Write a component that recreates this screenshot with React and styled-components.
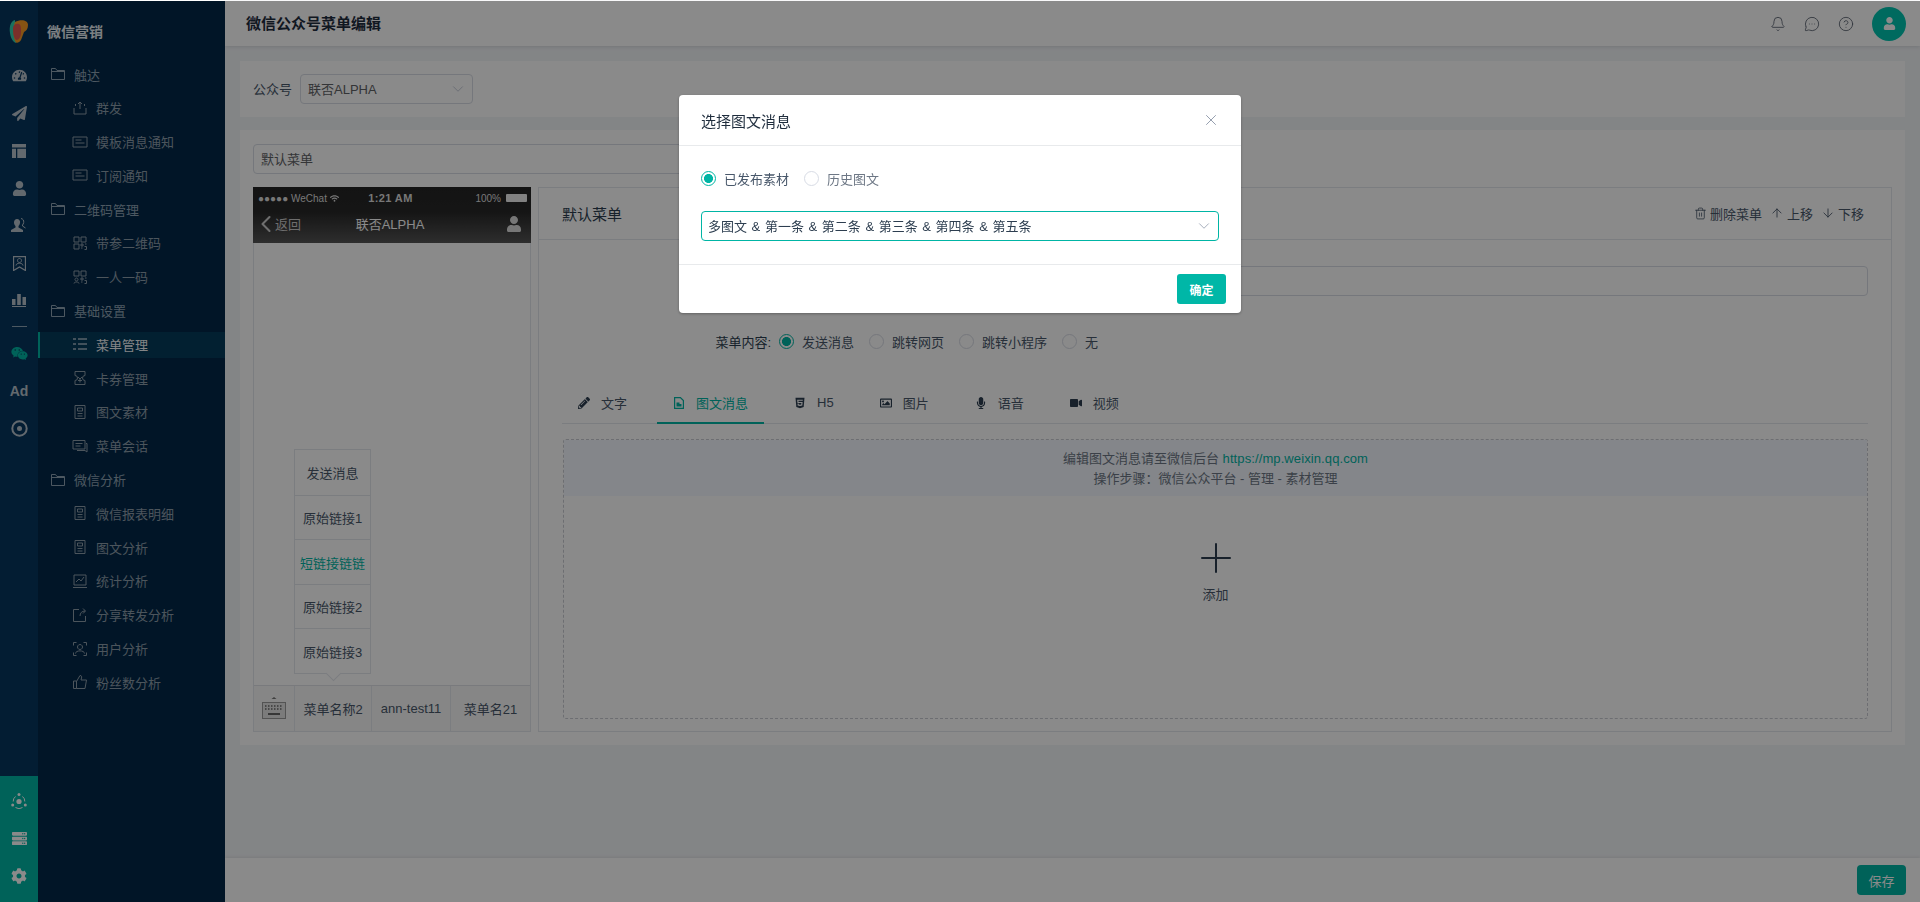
import styled, { createGlobalStyle } from "styled-components";
import { ArrowDown, ArrowUp, Bell, ChevronDown, ChevronLeft, CircleHelp, MessageCircleMore, Plus, Trash2, X } from "lucide-react";
import {
  FaCog,
  FaHtml5,
  FaMicrophone,
  FaPaperPlane,
  FaPencilAlt,
  FaRegImage,
  FaServer,
  FaTachometerAlt,
  FaUser,
  FaVideo,
  FaWeixin,
  FaWifi,
} from "react-icons/fa";

const teal = "#00b5a5";
const fontStack = `"Liberation Sans", "Noto Sans CJK SC", sans-serif`;

const Global = createGlobalStyle`
  html, body { margin: 0; padding: 0; height: 100%; overflow: hidden; background: #fff; }
  body { font-family: ${fontStack}; font-size: 13px; color: #2d3e50; }
  * { box-sizing: border-box; }
`;

const Page = styled.div`
  display: flex;
  height: 902px;
  padding-top: 1px;
`;

const Rail = styled.aside`
  width: 38px;
  flex: none;
  display: flex;
  flex-direction: column;
  align-items: center;
  background: #07375f;
`;

const LogoBox = styled.div`
  height: 56px;
  width: 100%;
  display: flex;
  align-items: center;
  justify-content: center;
  padding-top: 6px;
`;

const RailItem = styled.div`
  height: 37.5px;
  width: 100%;
  flex: none;
  display: flex;
  align-items: center;
  justify-content: center;
  color: ${(p) => p.$color || "#b8c2cc"};
  font-size: 15px;
`;

const RailAd = styled(RailItem)`
  font-weight: 700;
  font-size: 14px;
`;

const RailRule = styled.div`
  width: 15px;
  height: 1px;
  flex: none;
  margin: 6px 0 8px;
  background: #8fa4b5;
`;

const RailBottom = styled.div`
  margin-top: auto;
  width: 100%;
  height: 126px;
  flex: none;
  padding-top: 6px;
  background: ${teal};
`;

const Sidebar = styled.nav`
  width: 187px;
  flex: none;
  background: #032848;
`;

const SideTitle = styled.div`
  height: 61px;
  padding: 0 0 2px 9px;
  display: flex;
  align-items: center;
  font-size: 14px;
  font-weight: 700;
  color: #e6edf2;
`;

const SideList = styled.div`
  display: flex;
  flex-direction: column;
  gap: 7.8px;
`;

const SideRow = styled.div`
  height: 26px;
  display: flex;
  align-items: center;
  gap: 8px;
  padding-left: ${(p) => (p.$group ? "12px" : "34px")};
  padding-bottom: 2px;
  color: ${(p) => (p.$active ? "#f2f5f7" : p.$group ? "#8ea3b4" : "#8d9dab")};
  background: ${(p) => (p.$active ? "#053b5c" : "transparent")};
  box-shadow: ${(p) => (p.$active ? `inset 2px 0 0 ${teal}` : "none")};
  white-space: nowrap;
  svg { flex: none; }
`;

const Main = styled.main`
  flex: 1;
  min-width: 0;
  display: flex;
  flex-direction: column;
  background: #f3f5f8;
`;

const TopBar = styled.header`
  height: 45px;
  flex: none;
  display: flex;
  align-items: center;
  padding: 0 14px 0 21px;
  background: #fff;
  box-shadow: 0 1px 4px rgba(0, 21, 41, 0.12);
`;

const PageTitle = styled.h1`
  margin: 0 0 2px;
  font-size: 15px;
  font-weight: 700;
  color: #1f2d3d;
`;

const TopTools = styled.div`
  margin-left: auto;
  display: flex;
  align-items: center;
  gap: 18px;
  color: #5b6472;
`;

const Avatar = styled.div`
  width: 34px;
  height: 34px;
  border-radius: 50%;
  background: #00c4b0;
  color: #fff;
  display: flex;
  align-items: center;
  justify-content: center;
`;

const Content = styled.div`
  flex: 1;
  display: flex;
  flex-direction: column;
  gap: 13px;
  padding: 15px 15px 0;
`;

const FilterCard = styled.section`
  height: 56px;
  display: flex;
  align-items: center;
  gap: 8px;
  padding: 0 13px;
  background: #fff;
`;

const FieldLabel = styled.span`
  color: #48576a;
  padding-bottom: 1px;
`;

const SelectBox = styled.div`
  width: ${(p) => p.$width || "173px"};
  height: 30px;
  display: flex;
  align-items: center;
  justify-content: space-between;
  padding: 0 5px 1px ${(p) => (p.$focus ? "6px" : "7px")};
  border: 1px solid ${(p) => (p.$focus ? teal : "#d8dce5")};
  border-radius: 4px;
  background: #fff;
  color: ${(p) => (p.$focus ? "#2d3e50" : "#606266")};
  word-spacing: ${(p) => (p.$focus ? "1px" : "0")};
  svg { color: ${(p) => (p.$focus ? "#8a94a6" : "#b4bccc")}; }
`;

const EditCard = styled.section`
  height: 615px;
  padding: 14px 13px 12px;
  background: #fff;
`;

const NameInput = styled.div`
  width: 640px;
  height: 30px;
  display: flex;
  align-items: center;
  padding: 0 0 2px 7px;
  border: 1px solid #d8dce5;
  border-radius: 4px;
  color: #606266;
`;

const Workspace = styled.div`
  display: flex;
  gap: 7px;
  margin-top: 13px;
  height: 545px;
`;

const Phone = styled.div`
  width: 278px;
  flex: none;
  display: flex;
  flex-direction: column;
  border: 1px solid #e4e7ed;
  border-top: 0;
`;

const PhoneHead = styled.div`
  height: 56px;
  flex: none;
  margin: 0 -1px;
  color: #fff;
  background: linear-gradient(#242424 0%, #282828 45%, #555 100%);
`;

const StatusBar = styled.div`
  height: 22px;
  display: grid;
  grid-template-columns: 1fr 1fr 1fr;
  align-items: center;
  padding: 0 4px 0 5px;
  font-size: 10px;
  color: #ddd;
`;

const StatusLeft = styled.span`
  display: flex;
  align-items: center;
  gap: 3px;
  white-space: nowrap;
`;

const StatusTime = styled.span`
  font-weight: 700;
  font-size: 11px;
  letter-spacing: 0.4px;
  text-align: center;
  transform: translateX(-2px);
`;

const StatusRight = styled.span`
  display: flex;
  align-items: center;
  justify-content: flex-end;
  gap: 5px;
`;

const Battery = styled.i`
  display: block;
  width: 21px;
  height: 8px;
  background: #eee;
  border-radius: 1px;
`;

const NavBar = styled.div`
  height: 34px;
  display: grid;
  grid-template-columns: 1fr auto 1fr;
  align-items: center;
  padding: 0 9px 5px 5px;
  font-size: 13px;
`;

const NavBack = styled.span`
  display: flex;
  align-items: center;
  color: #ccc;
  svg { margin: -6px -5px -6px -6px; }
`;

const NavPerson = styled.span`
  display: flex;
  justify-content: flex-end;
  font-size: 16px;
  color: #ddd;
`;

const PhoneScreen = styled.div`
  flex: 1;
  display: flex;
  flex-direction: column;
  justify-content: flex-end;
  padding: 0 0 11px 40px;
`;

const SubMenu = styled.div`
  position: relative;
  width: 77px;
  border: 1px solid #e4e7ed;
  &::after {
    content: "";
    position: absolute;
    left: 33px;
    bottom: -6px;
    width: 10px;
    height: 10px;
    background: #fff;
    border-right: 1px solid #e4e7ed;
    border-bottom: 1px solid #e4e7ed;
    transform: rotate(45deg);
  }
`;

const SubItem = styled.div`
  height: 44.6px;
  display: flex;
  align-items: center;
  justify-content: center;
  font-size: 13px;
  white-space: nowrap;
  color: ${(p) => (p.$active ? teal : "#48576a")};
  & + & { border-top: 1px solid #e4e7ed; }
`;

const PhoneBar = styled.div`
  height: 46px;
  flex: none;
  display: grid;
  grid-template-columns: 40px 77px 79px 1fr;
  border-top: 1px solid #dfe2e8;
  background: #f8f8f8;
`;

const BarCell = styled.div`
  display: flex;
  align-items: center;
  justify-content: center;
  padding-bottom: 1px;
  white-space: nowrap;
  color: #48576a;
  & + & { border-left: 1px solid #e4e7ed; }
`;

const Panel = styled.div`
  flex: 1;
  min-width: 0;
  border: 1px solid #e4e7ed;
`;

const PanelHead = styled.div`
  height: 53px;
  display: flex;
  align-items: center;
  padding: 0 27px 0 23px;
  border-bottom: 1px solid #e4e7ed;
  margin-top: -1px;
`;

const PanelTitle = styled.div`
  font-size: 15px;
  color: #2d3e50;
`;

const PanelActions = styled.div`
  margin-left: auto;
  display: flex;
  align-items: center;
  gap: 8px;
`;

const PanelAction = styled.span`
  display: flex;
  align-items: center;
  gap: 3px;
  color: #48576a;
`;

const PanelBody = styled.div`
  padding: 26px 23px 0 24px;
`;

const FormRow = styled.div`
  display: grid;
  grid-template-columns: 208px 1fr;
  column-gap: 8px;
  align-items: center;
  margin-top: ${(p) => p.$top || 0}px;
`;

const FormLabel = styled.label`
  text-align: right;
  color: #2d3e50;
`;

const FormInput = styled.div`
  height: 30px;
  border: 1px solid #d8dce5;
  border-radius: 4px;
`;

const RadioGroup = styled.div`
  display: flex;
  align-items: center;
  gap: 15px;
  height: 20px;
`;

const RadioItem = styled.span`
  display: flex;
  align-items: center;
  gap: 8px;
  color: ${(p) => p.$color || "#48576a"};
`;

const RadioDot = styled.i`
  display: block;
  flex: none;
  width: 15px;
  height: 15px;
  border-radius: 50%;
  border: 1px solid ${(p) => (p.$on ? teal : "#d8dce5")};
  background: ${(p) => (p.$on ? `radial-gradient(circle, ${teal} 0 4.2px, #fff 4.8px)` : "#fff")};
`;

const Tabs = styled.div`
  display: flex;
  gap: 14px;
  height: 39px;
  margin-top: 34px;
  margin-left: -1px;
  border-bottom: 1px solid #e4e7ed;
`;

const Tab = styled.div`
  height: 39px;
  display: flex;
  align-items: center;
  gap: 11px;
  padding: 0 16px 2px;
  color: ${(p) => (p.$active ? teal : "#48576a")};
  border-bottom: 2px solid ${(p) => (p.$active ? teal : "transparent")};
  svg { flex: none; width: 12px; color: ${(p) => (p.$active ? teal : "#2d3e50")}; font-size: 12px; }
`;

const DropZone = styled.div`
  height: 280px;
  margin-top: 15px;
  border: 1px dashed #c9ccd2;
  border-radius: 3px;
  display: flex;
  flex-direction: column;
  align-items: center;
`;

const Notice = styled.div`
  width: 100%;
  height: 56px;
  padding-top: 9px;
  text-align: center;
  line-height: 20px;
  color: #6d7785;
  background: #f4f8ff;
`;

const NoticeLink = styled.span`
  color: ${teal};
  letter-spacing: 0.1px;
`;

const AddIcon = styled.div`
  margin-top: 45px;
  height: 34px;
  display: flex;
  align-items: center;
  justify-content: center;
  color: #2d3e50;
`;

const AddText = styled.div`
  margin-top: 9px;
  color: #48576a;
`;

const FootBar = styled.footer`
  height: 44px;
  flex: none;
  margin-top: auto;
  display: flex;
  align-items: center;
  justify-content: flex-end;
  padding: 0 14px 0 0;
  background: #fff;
  box-shadow: 0 -1px 3px rgba(0, 0, 0, 0.08);
`;

const SaveButton = styled.button`
  width: 49px;
  height: 30px;
  padding: 0;
  border: 0;
  border-radius: 4px;
  background: ${teal};
  color: #fff;
  font: 13px ${fontStack};
`;

const Overlay = styled.div`
  position: fixed;
  inset: 1px 0 0 0;
  background: rgba(0, 0, 0, 0.46);
`;

const Dialog = styled.div`
  position: fixed;
  left: 679px;
  top: 95px;
  width: 562px;
  height: 218px;
  display: flex;
  flex-direction: column;
  background: #fff;
  border-radius: 4px;
  box-shadow: 0 1px 3px rgba(0, 0, 0, 0.3);
`;

const DialogHead = styled.div`
  height: 51px;
  display: flex;
  align-items: center;
  justify-content: space-between;
  padding: 0 21px 0 22px;
  font-size: 15px;
  color: #1f2d3d;
  border-bottom: 1px solid #e8eaec;
  svg { color: #8a94a6; }
`;

const DialogBody = styled.div`
  height: 119px;
  padding: 22px 22px 0;
  border-bottom: 1px solid #e8eaec;
`;

const DialogFoot = styled.div`
  flex: 1;
  display: flex;
  justify-content: flex-end;
  padding: 9px 15px 0 0;
`;

const ConfirmButton = styled.button`
  width: 49px;
  height: 30px;
  padding: 0;
  border: 0;
  border-radius: 3px;
  background: #00b7a7;
  color: #fff;
  font: 700 12px ${fontStack};
`;

const DialogSelect = styled.div`
  margin-top: 23px;
`;

const line = { fill: "none", stroke: "currentColor", strokeWidth: 1 };

const sideIcons = {
  folder: <path d="M1.5 2.5h4l1.5 2h7.5v9h-13zM1.5 5.500h13" {...line} />,
  send: <path d="M2 8v6h12V8M8 9V2M6 4l2-2 2 2M3.500 6V4M12.500 6V4" {...line} />,
  note: <path d="M1 3h14v10H1zM3.500 6h6M3.500 9h9" {...line} />,
  qr: <path d="M2 2h5v5H2zM9 2h5v5H9zM2 9h5v5H2zM9 9h2v2H9zM13 9h1.500M9 13h1.500M12.500 11.500h2v3h-2" {...line} />,
  qrUser: <path d="M2 2h5v5H2zM9 2h5v5H9zM4.500 9a1.500 1.500 0 1 1-.01 0M2 14.500c0-2 5-2 5 0M9 9h2v2H9zM13 9h1.500M9 13h1.500M12.500 11.500h2v3h-2" {...line} />,
  list: <path d="M1 3h3M6 3h9M1 8h3M6 8h9M1 13h3M6 13h9" {...line} />,
  ticket: <path d="M3 1.500h10v4a2.500 2.500 0 0 0 0 5v4H3v-4a2.500 2.500 0 0 0 0-5zM6 7l2 2 2-2M8 9v3.500M6 10.500h4" {...line} />,
  doc: <path d="M3 1.500h10v13H3zM5.500 4h5v3h-5zM5.500 9.500h5M5.500 12h5" {...line} />,
  chat: <path d="M1 2.500h12v8.500H1zM3.500 5.500h7M3.500 8h5M14 5.500h1v8.500l-2-1.500H5" {...line} />,
  chart: <path d="M2 2h12v10H2zM1 14.500h14M4 9l3-3 2 2 3-4" {...line} />,
  share: <path d="M13.500 9v5.500h-12v-12H7M8 9c0-3 2-5 5-5M11 1.500L13.500 4 11 6.500" {...line} />,
  scan: <path d="M1.500 4.500v-3h3M11.500 1.500h3v3M1.500 11.500v3h3M11.500 14.500h3v-3M8 3.500a2.500 2.500 0 1 1-.01 0M3.500 12.500c0-3.500 9-3.500 9 0" {...line} />,
  thumb: <path d="M1.500 7h3v7.500h-3zM4.500 7.500L8 1.500c1.500 0 2 1 1.500 2.500L9 6h5.500l-1.500 8.500H4.500" {...line} />,
};

const SideIcon = ({ name }) => (
  <svg width="16" height="16" viewBox="0 0 16 16">
    {sideIcons[name]}
  </svg>
);

const Logo = () => (
  <svg width="20" height="26" viewBox="0 0 20 26">
    <path d="M6 1C2 2 0 7 1 14c.6 5 3 9 6 10 0-8-1-16-1-23z" fill="#2fd0b0" />
    <path d="M6 3c6-3 13-2 13 3 0 4-2 6-4 7l-3 8c-2 3-5 4-6 1C4 16 4 8 6 3z" fill="#f59a23" />
    <path d="M4 9c0-3 3-5 6-4 2 1 2 4 2 7 0 5-1 8-4 9-3 0-4-6-4-12z" fill="#e2574f" />
  </svg>
);

const TableIcon = () => (
  <svg width="14" height="14" viewBox="0 0 14 14" fill="currentColor">
    <path d="M0 0h14v3.500H0zM0 4.800h4V14H0zM5.300 4.800H14V14H5.300z" />
  </svg>
);

const PeopleIcon = () => (
  <svg width="16" height="15" viewBox="0 0 16 15" fill="currentColor">
    <path d="M6 1a3.200 3.200 0 0 1 3 4c-.3 1.500-1 2.500-1.500 3v1.500L12 12v2H0v-2l4.500-2.500V8C4 7.500 3 6.500 3 4.500 3 2.500 4.300 1 6 1z" />
    <path d="M10 .5c2 .3 3 2 2.700 4-.2 1.200-.8 2-1.200 2.500v1l3 2" fill="none" stroke="currentColor" />
  </svg>
);

const BadgeIcon = () => (
  <svg width="13" height="15" viewBox="0 0 13 15">
    <path d="M.5.500h12v14L6.500 11 .5 14.500z" fill="none" stroke="currentColor" strokeWidth="1.300" />
    <path d="M6.500 2.500a2 2 0 1 1-.01 0M3 9.500c0-3 7-3 7 0" fill="none" stroke="currentColor" />
  </svg>
);

const BarsIcon = () => (
  <svg width="14" height="13" viewBox="0 0 14 13" fill="currentColor">
    <path d="M0 5h3.500v6H0zM5.200 0h3.600v11H5.200zM10.500 3H14v8h-3.500zM0 12h14v1H0z" />
  </svg>
);

const DiscIcon = () => (
  <svg width="17" height="17" viewBox="0 0 17 17">
    <circle cx="8.500" cy="8.500" r="7.200" fill="none" stroke="currentColor" strokeWidth="2" />
    <circle cx="8.500" cy="8.500" r="2.500" fill="currentColor" />
  </svg>
);

const HubIcon = () => (
  <svg width="16" height="16" viewBox="0 0 16 16" fill="currentColor">
    <circle cx="8" cy="8.500" r="2.600" />
    <circle cx="8" cy="1.500" r="1.500" />
    <circle cx="1.700" cy="12" r="1.500" />
    <circle cx="14.300" cy="12" r="1.500" />
    <path d="M4.500 3.500A6 6 0 0 0 2.200 8.500M11.500 3.500a6 6 0 0 1 2.300 5M4.500 14.500a6 6 0 0 0 7 0" fill="none" stroke="currentColor" />
  </svg>
);

const DocTabIcon = () => (
  <svg width="10" height="12" viewBox="0 0 10 12">
    <path d="M.6.600h5.800l3 3v7.800H.6z" fill="none" stroke="currentColor" strokeWidth="1.200" />
    <path d="M2.500 5.500h3v1.500h2v2.500h-5z" fill="currentColor" />
  </svg>
);

const KeyboardIcon = () => (
  <svg width="24" height="22" viewBox="0 0 24 22">
    <path d="M12 0l2.500 2h-5z" fill="#777" />
    <rect x=".5" y="5.500" width="23" height="16" fill="#e4e4e4" stroke="#999" />
    <path d="M3 9h18M3 12h18" stroke="#666" strokeWidth="1.500" strokeDasharray="1.500 1.500" />
    <path d="M6 17h12" stroke="#666" strokeWidth="2" />
  </svg>
);

const sideMenu = [
  { group: true, icon: "folder", label: "触达" },
  { icon: "send", label: "群发" },
  { icon: "note", label: "模板消息通知" },
  { icon: "note", label: "订阅通知" },
  { group: true, icon: "folder", label: "二维码管理" },
  { icon: "qr", label: "带参二维码" },
  { icon: "qrUser", label: "一人一码" },
  { group: true, icon: "folder", label: "基础设置" },
  { icon: "list", label: "菜单管理", active: true },
  { icon: "ticket", label: "卡券管理" },
  { icon: "doc", label: "图文素材" },
  { icon: "chat", label: "菜单会话" },
  { group: true, icon: "folder", label: "微信分析" },
  { icon: "doc", label: "微信报表明细" },
  { icon: "doc", label: "图文分析" },
  { icon: "chart", label: "统计分析" },
  { icon: "share", label: "分享转发分析" },
  { icon: "scan", label: "用户分析" },
  { icon: "thumb", label: "粉丝数分析" },
];

const subItems = ["发送消息", "原始链接1", "短链接链链", "原始链接2", "原始链接3"];

const tabs = [
  { icon: <FaPencilAlt />, label: "文字" },
  { icon: <DocTabIcon />, label: "图文消息", active: true },
  { icon: <FaHtml5 />, label: "H5" },
  { icon: <FaRegImage />, label: "图片" },
  { icon: <FaMicrophone />, label: "语音" },
  { icon: <FaVideo />, label: "视频" },
];

export default function App() {
  return (
    <>
      <Global />
      <Page>
        <Rail>
          <LogoBox>
            <Logo />
          </LogoBox>
          <RailItem><FaTachometerAlt /></RailItem>
          <RailItem><FaPaperPlane /></RailItem>
          <RailItem><TableIcon /></RailItem>
          <RailItem><FaUser /></RailItem>
          <RailItem><PeopleIcon /></RailItem>
          <RailItem><BadgeIcon /></RailItem>
          <RailItem><BarsIcon /></RailItem>
          <RailRule />
          <RailItem $color={teal}><FaWeixin size={17} /></RailItem>
          <RailAd>Ad</RailAd>
          <RailItem><DiscIcon /></RailItem>
          <RailBottom>
            <RailItem $color="#fff"><HubIcon /></RailItem>
            <RailItem $color="#fff"><FaServer /></RailItem>
            <RailItem $color="#fff"><FaCog size={16} /></RailItem>
          </RailBottom>
        </Rail>

        <Sidebar>
          <SideTitle>微信营销</SideTitle>
          <SideList>
            {sideMenu.map((item) => (
              <SideRow key={item.label} $group={item.group} $active={item.active}>
                <SideIcon name={item.icon} />
                {item.label}
              </SideRow>
            ))}
          </SideList>
        </Sidebar>

        <Main>
          <TopBar>
            <PageTitle>微信公众号菜单编辑</PageTitle>
            <TopTools>
              <Bell size={16} strokeWidth={1.3} />
              <MessageCircleMore size={16} strokeWidth={1.3} />
              <CircleHelp size={16} strokeWidth={1.3} />
              <Avatar><FaUser size={13} /></Avatar>
            </TopTools>
          </TopBar>

          <Content>
            <FilterCard>
              <FieldLabel>公众号</FieldLabel>
              <SelectBox>
                联否ALPHA
                <ChevronDown size={18} strokeWidth={1} />
              </SelectBox>
            </FilterCard>

            <EditCard>
              <NameInput>默认菜单</NameInput>
              <Workspace>
                <Phone>
                  <PhoneHead>
                    <StatusBar>
                      <StatusLeft>●●●●● WeChat <FaWifi size={9} /></StatusLeft>
                      <StatusTime>1:21 AM</StatusTime>
                      <StatusRight>100% <Battery /></StatusRight>
                    </StatusBar>
                    <NavBar>
                      <NavBack>
                        <ChevronLeft size={28} strokeWidth={1.8} />
                        返回
                      </NavBack>
                      <span>联否ALPHA</span>
                      <NavPerson><FaUser /></NavPerson>
                    </NavBar>
                  </PhoneHead>
                  <PhoneScreen>
                    <SubMenu>
                      {subItems.map((label, i) => (
                        <SubItem key={label} $active={i === 2}>{label}</SubItem>
                      ))}
                    </SubMenu>
                  </PhoneScreen>
                  <PhoneBar>
                    <BarCell><KeyboardIcon /></BarCell>
                    <BarCell>菜单名称2</BarCell>
                    <BarCell>ann-test11</BarCell>
                    <BarCell>菜单名21</BarCell>
                  </PhoneBar>
                </Phone>

                <Panel>
                  <PanelHead>
                    <PanelTitle>默认菜单</PanelTitle>
                    <PanelActions>
                      <PanelAction><Trash2 size={13} strokeWidth={1.5} />删除菜单</PanelAction>
                      <PanelAction><ArrowUp size={14} strokeWidth={1.5} />上移</PanelAction>
                      <PanelAction><ArrowDown size={14} strokeWidth={1.5} />下移</PanelAction>
                    </PanelActions>
                  </PanelHead>
                  <PanelBody>
                    <FormRow>
                      <FormLabel>菜单名称:</FormLabel>
                      <FormInput />
                    </FormRow>
                    <FormRow $top={35}>
                      <FormLabel>菜单内容:</FormLabel>
                      <RadioGroup>
                        <RadioItem><RadioDot $on />发送消息</RadioItem>
                        <RadioItem><RadioDot />跳转网页</RadioItem>
                        <RadioItem><RadioDot />跳转小程序</RadioItem>
                        <RadioItem><RadioDot />无</RadioItem>
                      </RadioGroup>
                    </FormRow>
                    <Tabs>
                      {tabs.map((tab) => (
                        <Tab key={tab.label} $active={tab.active}>
                          {tab.icon}
                          {tab.label}
                        </Tab>
                      ))}
                    </Tabs>
                    <DropZone>
                      <Notice>
                        编辑图文消息请至微信后台 <NoticeLink>https://mp.weixin.qq.com</NoticeLink>
                        <br />
                        操作步骤：微信公众平台 - 管理 - 素材管理
                      </Notice>
                      <AddIcon><Plus size={48} strokeWidth={1} /></AddIcon>
                      <AddText>添加</AddText>
                    </DropZone>
                  </PanelBody>
                </Panel>
              </Workspace>
            </EditCard>
          </Content>

          <FootBar>
            <SaveButton>保存</SaveButton>
          </FootBar>
        </Main>
      </Page>

      <Overlay />
      <Dialog>
        <DialogHead>
          选择图文消息
          <X size={18} strokeWidth={1.2} />
        </DialogHead>
        <DialogBody>
          <RadioGroup>
            <RadioItem><RadioDot $on />已发布素材</RadioItem>
            <RadioItem $color="#6d7785"><RadioDot />历史图文</RadioItem>
          </RadioGroup>
          <DialogSelect>
            <SelectBox $focus $width="518px">
              多图文 & 第一条 & 第二条 & 第三条 & 第四条 & 第五条
              <ChevronDown size={18} strokeWidth={1} />
            </SelectBox>
          </DialogSelect>
        </DialogBody>
        <DialogFoot>
          <ConfirmButton>确定</ConfirmButton>
        </DialogFoot>
      </Dialog>
    </>
  );
}
